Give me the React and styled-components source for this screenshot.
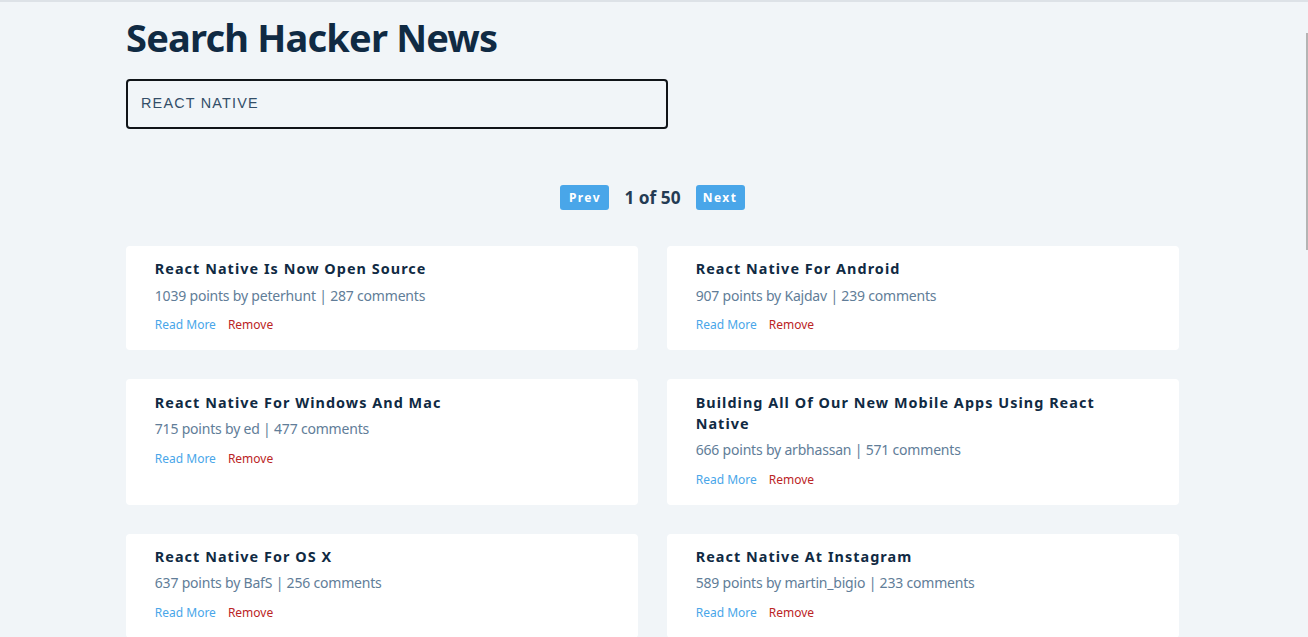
import React from "react";
import styled, { createGlobalStyle } from "styled-components";

const Global = createGlobalStyle`
  html { scrollbar-width: none; }
  html::-webkit-scrollbar { display: none; }
  body {
    margin: 0;
    background: #f1f5f8;
    font-family: "Noto Sans", "Open Sans", sans-serif;
    color: #102a43;
    border-top: 2px solid #dde2e7;
  }
  * { box-sizing: border-box; }
`;

const Page = styled.div`
  padding-right: 3px;
`;

const Section = styled.section`
  width: 90vw;
  max-width: 1053px;
  margin: 0 auto;
`;

const SearchForm = styled(Section).attrs({ as: "form" })`
  padding-top: 12px;
  display: flex;
  flex-direction: column;
`;

const Heading = styled.h2`
  margin: 0;
  font-size: 38px;
  line-height: 46px;
  font-weight: 700;
  letter-spacing: -0.8px;
  color: #102a43;
`;

const Input = styled.input`
  margin-top: 19px;
  width: 542px;
  height: 50px;
  padding: 0 13px 2px;
  border: 2px solid #101418;
  border-radius: 4px;
  background: transparent;
  font-family: "Liberation Sans", Arial, sans-serif;
  font-size: 14.4px;
  line-height: 1;
  letter-spacing: 1.2px;
  text-transform: uppercase;
  color: #334e68;
  caret-color: #102a43;
  outline: none;
`;

const Pager = styled(Section)`
  margin-top: 56px;
  display: flex;
  justify-content: center;
  align-items: center;
  gap: 15px;
`;

const PageButton = styled.button`
  width: 49px;
  height: 25px;
  padding: 0;
  border: none;
  border-radius: 3px;
  background: #49a6e9;
  color: #fff;
  font-family: "Noto Sans", sans-serif;
  font-weight: 700;
  font-size: 12px;
  letter-spacing: 1.44px;
  text-align: center;
`;

const PageInfo = styled.p`
  margin: 0;
  font-size: 17.28px;
  font-weight: 700;
  color: #243b53;
`;

const Stories = styled(Section)`
  margin-top: 36px;
  display: grid;
  grid-template-columns: 1fr 1fr;
  gap: 28.8px;
`;

const Story = styled.article`
  background: #fff;
  border-radius: 4px;
  padding: 12.4px 28.8px 14.4px;
`;

const Title = styled.h4`
  margin: 0 0 4.6px;
  font-size: 14.4px;
  line-height: 21.6px;
  font-weight: 700;
  letter-spacing: 1.05px;
  color: #102a43;
`;

const Info = styled.p`
  margin: 0 0 8.2px;
  font-size: 14px;
  line-height: 21.6px;
  letter-spacing: -0.2px;
  color: #617d98;
`;

const Links = styled.div`
  font-size: 14.4px;
  line-height: 21.6px;
  display: flex;
  align-items: center;
  gap: 12px;
`;

const ReadLink = styled.a`
  font-size: 12px;
  color: ${(p) => (p.$danger ? "#bb2525" : "#49a6e9")};
  text-decoration: none;
`;

const ScrollThumb = styled.div`
  position: fixed;
  right: 0;
  top: 33px;
  width: 2px;
  height: 217px;
  background: #b4b4b4;
`;

const stories = [
  ["React Native Is Now Open Source", 1039, "peterhunt", 287],
  ["React Native For Android", 907, "Kajdav", 239],
  ["React Native For Windows And Mac", 715, "ed", 477],
  ["Building All Of Our New Mobile Apps Using React Native", 666, "arbhassan", 571],
  ["React Native For OS X", 637, "BafS", 256],
  ["React Native At Instagram", 589, "martin_bigio", 233],
];

export default function App() {
  return (
    <Page>
      <Global />
      <SearchForm onSubmit={(e) => e.preventDefault()}>
        <Heading>Search Hacker News</Heading>
        <Input defaultValue="react native" autoFocus />
      </SearchForm>
      <Pager>
        <PageButton>Prev</PageButton>
        <PageInfo>1 of 50</PageInfo>
        <PageButton>Next</PageButton>
      </Pager>
      <Stories>
        {stories.map(([title, points, author, comments]) => (
          <Story key={title}>
            <Title>{title}</Title>
            <Info>
              {points} points by {author} | {comments} comments
            </Info>
            <Links>
              <ReadLink href="#">Read More</ReadLink>
              <ReadLink as="span" $danger>
                Remove
              </ReadLink>
            </Links>
          </Story>
        ))}
      </Stories>
      <ScrollThumb />
    </Page>
  );
}
